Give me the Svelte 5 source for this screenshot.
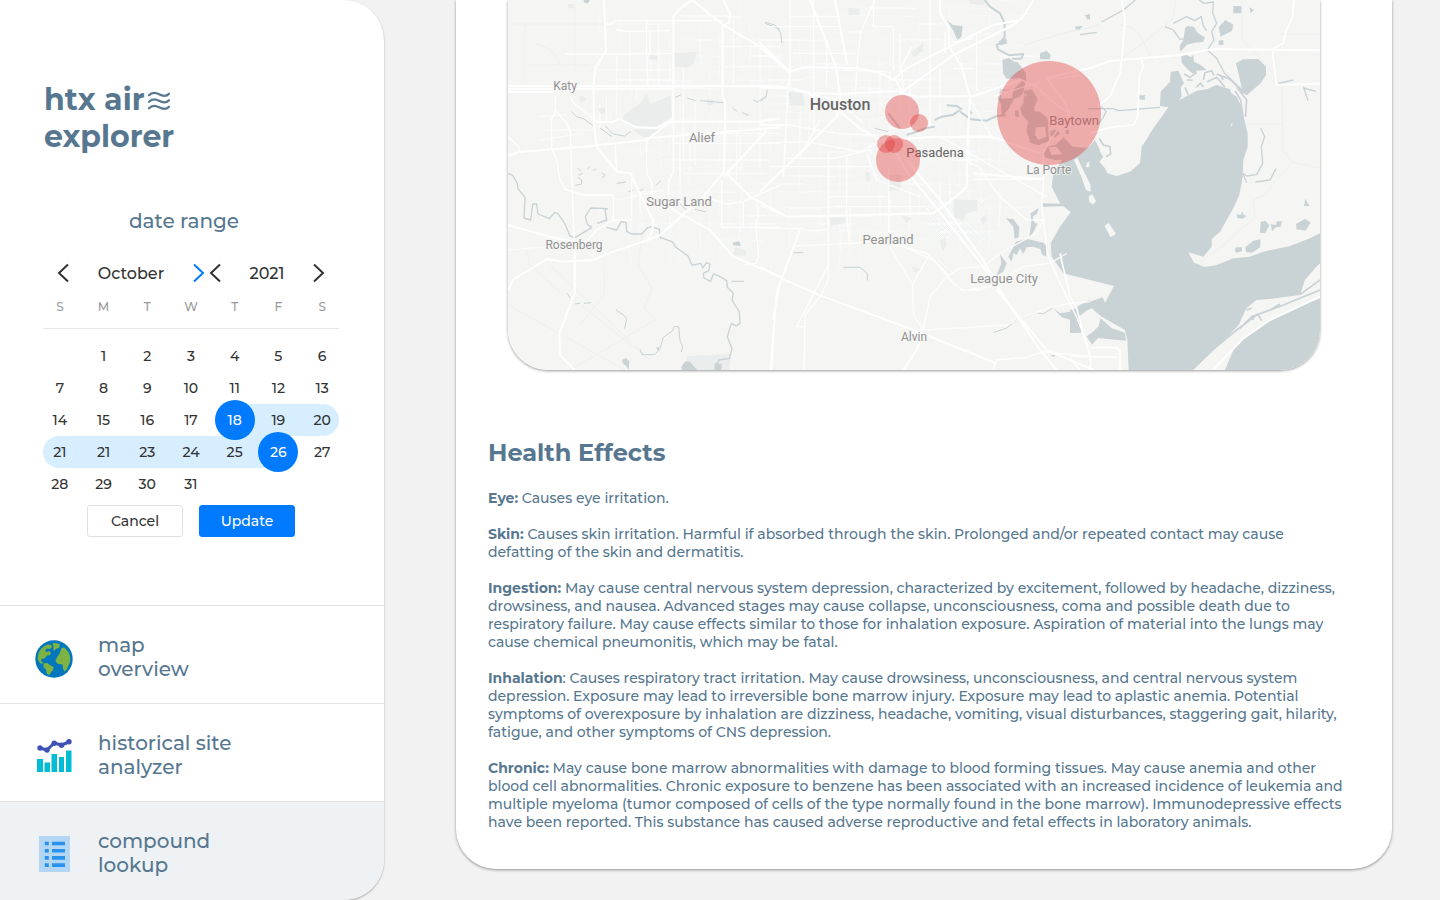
<script>
  const weekdays = ['S', 'M', 'T', 'W', 'T', 'F', 'S'];
  const weeks = [
    [null, 1, 2, 3, 4, 5, 6],
    [7, 8, 9, 10, 11, 12, 13],
    [14, 15, 16, 17, 18, 19, 20],
    [21, 21, 23, 24, 25, 26, 27],
    [28, 29, 30, 31, null, null, null]
  ];
  const rangeStart = 18;
  const rangeEnd = 26;

  function dayClass(day) {
    if (day === rangeStart) return 'start';
    if (day === rangeEnd) return 'end';
    return day > rangeStart && day < rangeEnd ? 'within' : '';
  }

  const effects = [
    ['Eye:', ' Causes eye irritation.'],
    ['Skin:', ' Causes skin irritation. Harmful if absorbed through the skin. Prolonged and/or repeated contact may cause defatting of the skin and dermatitis.'],
    ['Ingestion:', ' May cause central nervous system depression, characterized by excitement, followed by headache, dizziness, drowsiness, and nausea. Advanced stages may cause collapse, unconsciousness, coma and possible death due to respiratory failure. May cause effects similar to those for inhalation exposure. Aspiration of material into the lungs may cause chemical pneumonitis, which may be fatal.'],
    ['Inhalation', ': Causes respiratory tract irritation. May cause drowsiness, unconsciousness, and central nervous system depression. Exposure may lead to irreversible bone marrow injury. Exposure may lead to aplastic anemia. Potential symptoms of overexposure by inhalation are dizziness, headache, vomiting, visual disturbances, staggering gait, hilarity, fatigue, and other symptoms of CNS depression.'],
    ['Chronic:', ' May cause bone marrow abnormalities with damage to blood forming tissues. May cause anemia and other blood cell abnormalities. Chronic exposure to benzene has been associated with an increased incidence of leukemia and multiple myeloma (tumor composed of cells of the type normally found in the bone marrow). Immunodepressive effects have been reported. This substance has caused adverse reproductive and fetal effects in laboratory animals.']
  ];

  const places = [
    { name: 'Katy', x: 565, y: 90, size: 12 },
    { name: 'Alief', x: 702, y: 142, size: 13 },
    { name: 'Sugar Land', x: 679, y: 206, size: 13 },
    { name: 'Rosenberg', x: 574, y: 249, size: 12 },
    { name: 'Pearland', x: 888, y: 244, size: 13 },
    { name: 'League City', x: 1004, y: 283, size: 13 },
    { name: 'Alvin', x: 914, y: 341, size: 12 },
    { name: 'La Porte', x: 1049, y: 174, size: 12 },
    { name: 'Baytown', x: 1074, y: 125, size: 13 },
    { name: 'Pasadena', x: 935, y: 157, size: 13, kind: 'town' },
    { name: 'Houston', x: 840, y: 110, size: 16, kind: 'city' }
  ];

  const sites = [
    [902, 112, 17], [919, 123, 9], [886, 144, 9], [894, 144, 9], [898, 160, 22], [1049, 113, 52]
  ];

  // Side streets: short segments on a loose grid around the city centre.
  let seed = 11;
  const rand = () => (seed = (seed * 16807) % 2147483647) / 2147483647;
  let streets = '';
  for (let i = 0; i < 280; i++) {
    const a = rand();
    const b = rand();
    const x = 600 + Math.round((a * 400) / 10) * 10;
    const y = Math.round((b * 240) / 8) * 8;
    const len = 14 + Math.round(rand() * 40);
    const bend = Math.round(rand() * 4 - 2);
    streets += i % 2 ? `M${x} ${y}h${len}l4 ${bend}h10` : `M${x} ${y}v${Math.round(len * 0.8)}l${bend} 4v8`;
  }
  for (let i = 0; i < 24; i++) {
    const x = 915 + Math.round(rand() * 55);
    const y = 205 + Math.round(rand() * 55);
    streets += i % 2 ? `M${x} ${y}l22 20` : `M${x} ${y}l20 -20`;
  }
</script>

{#snippet chevron(dir)}
  <svg width="12" height="20" viewBox="0 0 12 20" aria-hidden="true">
    <path d={dir === 'left' ? 'M11 1.5 2 10l9 8.5' : 'M1 1.5 10 10l-9 8.5'} fill="none" stroke="currentColor" stroke-width="2" />
  </svg>
{/snippet}

<div class="page">
  <aside>
    <h1>
      htx air
      <svg width="24" height="20" viewBox="0 0 24 20" aria-hidden="true">
        <g fill="none" stroke="currentColor" stroke-width="2.200" stroke-linecap="round">
          <path d="M2 4.300C5 1 8.500 1.300 12 3.200S19 6 22 2.700" />
          <path d="M2 10.800C5 7.500 8.500 7.800 12 9.700S19 12.500 22 9.200" />
          <path d="M2 17.300C5 14 8.500 14.300 12 16.200S19 19 22 15.700" />
        </g>
      </svg><br />explorer
    </h1>

    <section class="dates" aria-label="date range">
      <h2>date range</h2>
      <div class="pickers">
        <div class="picker month">
          <button aria-label="Previous month">{@render chevron('left')}</button>
          <span>October</span>
          <button class="active" aria-label="Next month">{@render chevron('right')}</button>
        </div>
        <div class="picker year">
          <button aria-label="Previous year">{@render chevron('left')}</button>
          <span>2021</span>
          <button aria-label="Next year">{@render chevron('right')}</button>
        </div>
      </div>
      <table>
        <thead>
          <tr>{#each weekdays as d}<th scope="col">{d}</th>{/each}</tr>
        </thead>
        <tbody>
          {#each weeks as week}
            <tr>
              {#each week as day}
                <td class={dayClass(day)}>{#if day}<button>{day}</button>{/if}</td>
              {/each}
            </tr>
          {/each}
        </tbody>
      </table>
      <div class="actions">
        <button>Cancel</button>
        <button class="primary">Update</button>
      </div>
    </section>

    <nav>
      <a href="#map">
        <svg width="38" height="38" viewBox="0 0 38 38" aria-hidden="true">
          <circle cx="19" cy="19" r="18.700" fill="#0277bd" />
          <g fill="#7cb342">
            <path d="M3 20C2 12 7 6 13 4.500l3 .5 1 2-2 2-3-.5-2 2 1.500 1.500 3-1 1.500 2-1 2-3 .5-2.500 3-3 .500-.5 2 2 1.500-1 1.500-2-1Z" />
            <path d="M17.500 3.300 21 3l4 1.200-1 3.800-3 .7-1.500 2-1.500-1.500.5-2.500Z" />
            <path d="M26.500 8 29 7.500C34 11 36 16 35 22l-3 7-2.500 2.500-1.500-3-.5-4-5-.7-2-3.300 2-4 2-3 1.500-4Z" />
            <path d="M8.500 23.500 12 23l3 2 3.500 2-.5 3.500-2 1.500-1.500 3-2.500-1-1-4.500-2.500-2.500Z" />
          </g>
        </svg>
        <span>map<br />overview</span>
      </a>
      <a href="#history">
        <svg width="38" height="38" viewBox="0 0 38 38" aria-hidden="true">
          <path fill="#00bcd4" d="M2 21h6V34H2ZM9.500 24.500h5.500V34H9.500ZM16.500 16H22v18h-5.500ZM24 19h5v15h-5ZM31 12.500h5.500V34H31Z" />
          <g fill="#3f51b5">
            <path d="M5 10 12 12 19.200 5 26.500 7 34 4" fill="none" stroke="#3f51b5" stroke-width="3" stroke-linejoin="round" />
            <circle cx="5" cy="10" r="2.700" /><circle cx="12" cy="12" r="2.700" /><circle cx="19.200" cy="5.300" r="2.700" /><circle cx="26.500" cy="7.300" r="2.700" /><circle cx="34" cy="3.800" r="2.700" />
          </g>
        </svg>
        <span>historical site<br />analyzer</span>
      </a>
      <a href="#compounds" class="current" aria-current="page">
        <svg width="38" height="38" viewBox="0 0 38 38" aria-hidden="true">
          <path fill="#b3d6f4" d="M4 0H35v36H4Z" />
          <path fill="#2793ee" d="M9.800 5.700h4v3.600h-4Zm7.200 0h13v3.600H17ZM9.800 12.900h4v3.600h-4Zm7.200 0h13v3.600H17ZM9.800 20.100h4v3.600h-4Zm7.200 0h13v3.600H17ZM9.800 27.300h4v3.600h-4Zm7.200 0h13v3.600H17Z" />
        </svg>
        <span>compound<br />lookup</span>
      </a>
    </nav>
  </aside>

  <main>
    <article>
      <svg class="map" viewBox="508 0 812 370" role="img" aria-label="Map of the Houston area">
        <rect x="508" width="812" height="370" fill="#f5f5f4" />

        <!-- Streets -->
        <path d={streets} fill="none" stroke="#eff1f0" stroke-width="2" />
        <path d={streets} fill="none" stroke="#fcfdfd" stroke-width="1" />
        <g fill="none" stroke="#edefee" stroke-width="1">
          <path d="M508 24H606M525 25V84M528 65H590M575 0V70M535 44C545 46 556 50 560 66M508 305 625 370M582 306 650 360M550 265 650 360M570 370 655 320M642 235 638 265 652 288 644 308 655 320M526 250 530 265 560 292M605 265 604 295 580 325M1024 45 1064 33 1100 25M1280 34H1320M1176 0 1173 18 1147 40 1120 60M1120 25C1145 25 1148 60 1155 62M1242 0V40L1262 60 1282 85 1283 150 1292 162 1320 168M1292 162 1264 195 1253 200 1255 217 1220 248 1200 262M1246 124H1282" />
        </g>

        <!-- Parks and reservoirs -->
        <g fill="#ebedec">
          <g transform="translate(450 0) scale(.33333)">
            <path d="M520 345 570 310 590 280 600 312 662 286 666 350 620 385 560 385 520 365ZM545 388 640 388 600 412 580 412ZM672 158 740 156 732 190 718 202 676 200ZM710 1068 845 1062 838 1110 710 1110ZM770 295 790 298 788 315 772 316ZM446 325 466 325 464 342 450 340ZM352 12 372 12 370 26 354 24ZM598 165 624 167 622 180 598 178ZM855 742 890 750 886 768 850 765ZM386 290 400 288 410 300 392 308Z" />
          </g>
          <g transform="translate(760 0) scale(.33333)">
            <path d="M84 274 130 280 134 318 90 316ZM580 598 652 600 650 632 618 640 610 662 582 650ZM384 525 425 525 420 570 388 572ZM264 24 300 26 298 44 266 46ZM210 652 260 652 250 672 212 676ZM452 160 490 128 490 152 462 172ZM316 516 330 518 330 544 318 542ZM540 720 556 714 560 735 548 755ZM660 656 676 645 682 660 670 675ZM625 0 680 0 670 14 630 12ZM456 800 480 806 466 820ZM426 646 455 655 440 670Z" />
          </g>
        </g>

        <!-- Rivers and bayous -->
        <g fill="none" stroke="#c9d2d4" stroke-linejoin="round">
          <g transform="translate(450 0) scale(.33333)" stroke-width="4">
            <path d="M174 520 188 526 202 550 204 566 225 592 222 654 242 660 248 612 260 612 264 642 298 656 314 638 325 642 345 672 360 708 375 713 426 682M442 670 470 660 465 630 472 626 422 624 406 650 412 674 426 682M470 682 500 690 514 664 528 668 530 694 545 702 575 702 592 684 605 680 628 688 630 712 668 726 676 740 714 768 726 796 752 790 758 804 770 788 780 792 776 812 760 820 762 834 782 844 790 822 806 828 830 842 832 862 850 880 846 900 868 936 870 970 858 978 844 970 832 1010 846 1046 838 1076 806 1080 796 1110" />
            <path d="M376 556 394 552 396 540 382 532M386 525 398 520M394 514 382 504M412 508 418 500M430 512 438 506M455 518 466 526 456 534M500 550 528 546M535 575 550 570M566 572 580 568M618 556 632 542M364 334 380 350 400 356 436 382M450 384 486 410M466 378 490 402 524 408 542 394M676 292 694 284M712 294 736 302M750 302 820 308M848 324 860 334M876 338 896 346M910 300 922 306 950 288M945 70 966 78 990 88M352 880 360 894M374 912 390 910M402 910 424 908M498 930 522 946 530 956 524 986M570 1048 576 1064 614 1064 630 1046 640 1012 668 992 672 980 686 980 690 1022 698 1040 694 1056M844 844 882 844M690 612 710 630M735 628 768 636" stroke-width="3" />
          </g>
          <g transform="translate(760 0) scale(.33333)" stroke-width="5">
            <path d="M674 0 690 20 720 40 734 70 734 110 720 130 710 134 714 148 748 166 790 162 784 176 756 176M524 360 545 350 580 344 600 330M560 316 590 318 606 328M600 335 632 358 680 362 710 348 738 346M624 330 636 340M440 405 470 395 494 385 524 380M385 340 420 385" stroke-width="6" />
            <path d="M0 306 18 290 22 270M16 66 46 76 62 100 66 130M250 802H300L322 820V842M100 758H130M700 998 740 984 770 960M765 966 830 938 850 942 880 922M345 385 385 395" stroke-width="3" />
          </g>
          <g transform="translate(1070 0) scale(.33333)" stroke-width="4">
            <path d="M94 66 160 30 196 0M30 104 80 97M55 326H130L145 332 270 322M388 0 402 10 430 6 428 40 440 70 425 95 432 120 412 150 440 175 465 222M285 80 310 90 330 118 350 115M310 70 350 50 374 62 394 50 400 78 410 92M700 260 714 302M700 264 738 274M625 250 670 240M572 384 584 410 574 440 578 490 560 524 530 528 518 520 530 548M556 546 600 540 618 506M466 222 532 285M95 320 108 335 98 355 85 372" />
          </g>
        </g>

        <!-- Bays and lakes -->
        <g fill="#c9d2d4">
          <g transform="translate(1070 0) scale(.33333)">
            <path d="M-55 560-30 610 2 637-30 680-58 730-55 770-20 820 0 825 132 858 105 908 98 892 60 905 20 925 0 930 0 950 65 925 95 950 165 990 172 1020 176 1110H370L430 1050 500 990 515 955 530 925 560 900 590 898 690 885 705 840 735 805 750 790V700L720 715 660 738 580 755 540 770 490 775 440 795 405 801 372 788 355 757 400 770 425 740V718L450 695 490 625 508 585 518 530 520 480 533 440V400L523 360 515 320 500 290 484 280 480 268 460 262 440 255 410 268 380 272 325 302 335 290 332 262 342 250 325 212 302 215 300 245 272 275 270 318 295 322 240 400 235 410 215 440 210 490 180 515 140 528 112 520 105 505 88 485 100 470 80 440 60 438 20 460-20 475-50 520Z" />
            <path d="M750 895 690 915 600 960 530 1005 490 1050 465 1110H750Z" />
            <path d="M498 190 520 178 565 177 588 200 588 225 572 250 548 270 532 284 518 280 508 230Z" />
            <path d="M345 85 352 78 372 80 382 98 405 112 400 125 375 128 350 134 332 155 328 140 340 120ZM334 168 350 165 362 172 370 165 372 185 392 195 410 210 380 212 370 222 350 205 335 188ZM446 82 466 60 490 74 486 92 452 110ZM446 122 460 120 460 135 446 135ZM490 18H514V40H490ZM538 22 552 30 542 40ZM44 44 60 48 54 60ZM14 82 38 78 28 90ZM206 286 225 286 224 300 208 298ZM572 666 586 662 598 676 586 700 570 698ZM602 672 618 676 620 664 636 664 632 680 618 682 606 694ZM678 672 706 656 722 668 706 692 680 688ZM526 742 550 722 572 718 570 742 546 758 528 756ZM494 748 500 742 516 742 516 754 498 758ZM706 596 718 618 702 618ZM500 642 512 645 518 634 520 644 530 648 518 656 502 654ZM0 958 28 952 34 998H0ZM52 1010 85 980 92 955 125 985 165 998 168 1022 120 1018 84 1014 66 1034Z" />
          </g>
          <g transform="translate(760 0) scale(.33333)">
            <path d="M560 60 580 76 608 78 604 110 592 120 582 95ZM840 160 860 152 872 165 870 178 840 178ZM716 124 738 114 742 130 722 136ZM848 610 930 612 930 618 850 620ZM738 655 760 658 778 682 776 712 764 716 760 680ZM812 640 836 624 832 640 818 650 824 668 832 672 818 700 808 710 814 665ZM745 770 768 725 800 716 850 728 862 740 858 770 845 762 842 748 820 740 800 742 790 762 780 745 770 765 760 760 755 785ZM720 762 740 790 730 815 710 826 724 790ZM880 925 900 940 930 935 960 915 990 900 990 925 955 950 955 998H932V960L905 952ZM945 80 970 78 948 90ZM976 46 990 42 990 60ZM870 1064 886 1066 882 1072ZM980 1010 990 1000V1025Z" />
          </g>
          <g transform="translate(985 50) scale(.33333)">
            <path d="M52 30 72 24 85 34 100 38 122 68 124 100 105 85 65 86 54 70ZM46 118 84 120 112 92 120 100 115 128 105 140 88 146 70 178 50 200 48 160 38 148ZM118 122 140 118 158 148 148 172 148 184 165 185 188 205 192 272 160 286 136 278 124 240 130 215 112 195 105 175 115 160ZM90 182 100 180 102 202 90 198ZM196 244 212 238 225 250 212 262 196 258ZM242 240H252V252H242ZM174 308 186 290 212 284 236 262 262 290 310 294 330 270 345 300 320 330 280 350 262 328 210 330 180 322Z" />
          </g>
          <g transform="translate(450 0) scale(.33333)">
            <path d="M516 1080 528 1074 538 1084 536 1110 530 1100 518 1088ZM694 1100 706 1084 720 1086 742 1110H696ZM794 1090 816 1092 814 1110H794ZM400 0H420L414 10 404 8ZM848 728 868 724 872 738 850 736ZM618 1044 628 1040 626 1054Z" />
          </g>
        </g>

        <!-- Islands and barrier strips -->
        <g fill="#f5f5f4">
          <g transform="translate(1070 0) scale(.33333)">
            <path d="M12 480 22 474 42 515 62 555 62 575 48 570 34 530ZM56 590 66 582 78 602 70 614 58 606ZM104 678 116 668 138 702 122 712ZM50 490 58 484 58 500 48 502ZM708 838 738 805 742 830 715 860 700 865ZM482 372 488 370 486 380Z" />
            <path d="M515 965 530 925 560 900 620 905 600 930 690 885 750 850V895L690 915 600 960 530 1005 490 1050 462 1110H370L440 1045Z" />
          </g>
          <g transform="translate(985 50) scale(.33333)">
            <path d="M48 122 84 120 82 144 48 146ZM152 232 180 230 184 260 160 270 150 254ZM190 292 214 290 232 312 200 316ZM118 128 125 135 120 142Z" />
          </g>
        </g>
        <g transform="translate(1070 0) scale(.33333)" fill="none" stroke="#c9d2d4" stroke-width="5">
          <path d="M370 1105 430 1048 500 990 560 945 640 915 750 870M690 884 750 840M510 985 545 950 600 930 630 912M530 930 545 925M562 940 575 962M548 945 550 960M342 222 360 232 378 220 372 208M378 262 392 250 400 262M400 240 405 218 425 212 432 226M412 245 440 232 465 262M345 262 355 285M350 240 368 240M440 222 480 238 505 262 520 280M500 262 530 300 526 350M495 272 512 300 518 345M450 225 460 240M88 415 100 435 120 440 122 462 108 470" />
        </g>

        <!-- Secondary roads -->
        <g fill="none" stroke="#fff" stroke-linejoin="round">
          <g transform="translate(450 0) scale(.33333)" stroke-width="4">
            <path d="M470 72 485 72 495 62H815M345 162H500L668 160M590 60V165L594 260M500 90 540 95 660 92M316 290V330L350 370 362 400V440L374 760V880M305 445 304 360 316 332M305 445 320 480 330 540 346 568 400 585H490V660M174 410 206 440 208 456M360 290 372 310 440 365M590 415V520L606 548V600M670 365V515L656 545V600L665 625 700 650M495 430 500 515M545 520V660L490 660 440 690 400 735 375 745M760 590 830 612 880 605 990 555M880 605V680M815 540V680M815 682H990M920 600 925 640 918 680 926 770 918 790 880 795M965 1108 980 870 990 850" />
            <path d="M810 140H990M820 200H990M850 60V250M930 110V500M700 200V480M735 310V500M860 390V540M680 400H990M670 430H990M680 480H960M700 520H950M500 600 640 570M174 750 290 740 370 735M500 165V260M540 100V260M625 70V260M440 210H670M470 290V370M500 260V350M560 260V300M270 350 350 345M280 390H430M270 420 400 400" stroke-width="3" stroke-opacity=".8" />
          </g>
          <g transform="translate(760 0) scale(.33333)" stroke-width="4">
            <path d="M0 140 90 222 84 260 76 440 70 530M160 0 162 400M345 0 302 96 290 212 286 290M510 0V380M455 140 425 200 430 280M0 260H80L150 278 170 320M0 375H90L230 400 345 405M0 430 140 425 300 455 380 415M70 475H220L330 450M205 460V840L180 890 135 945 132 1110M260 470V640L268 726M386 500V735L458 855 460 945 490 990M80 340 72 480M0 615 80 650 205 648M0 685H120L150 692 205 688M110 738 270 730 330 725 430 740 520 780 580 850 610 872 680 860M320 460 350 540 480 590M100 270 230 300 310 370M180 360 120 470M250 210 380 215M286 160H100M240 50H90M240 80H20M540 205V290M630 300 700 420M555 95V160M650 100V270M560 130 640 115M580 205H640M210 590H380M30 500H330M220 620H500M340 0V80H400V210M420 100V220M90 220V0M200 260V120M860 240 960 225M640 538H850M620 485 655 500 720 590 800 660H850M700 290 840 245M510 760 460 850M480 990 580 985 740 975 800 950 860 925 930 910 990 905M430 740 500 760 560 820 580 850M600 870 660 870 710 850 790 800 870 790 920 760M490 990 510 890 560 830 600 805 670 800 720 760 830 700 850 660M50 880 30 1110M205 795 110 980 135 980M540 410 860 590" stroke-opacity=".85" />
            <path d="M850 450V560L845 610 862 760 900 850 945 940 985 1040M700 1108 710 1080 800 1072 850 1055 990 1070M860 235 910 300 930 340 870 420 850 460M775 235 830 260 890 315 990 380" />
          </g>
          <g transform="translate(1070 0) scale(.33333)" stroke-width="5">
            <path d="M155 0 165 60 155 180 150 220 120 290 80 320M215 180 220 200 208 230 203 350 190 375 120 382 60 400M672 0 668 50 648 95 640 130 610 145 608 165 620 255 750 251M-30 760 0 890 20 925 45 1020 62 1075 62 1110M0 1068 145 1072M62 1043H140L150 1052V1110M0 1075 30 1110" />
          </g>
        </g>

        <!-- Highways -->
        <g fill="none" stroke="#fff" stroke-width="6" stroke-linejoin="round">
          <g transform="translate(450 0) scale(.33333)">
            <path d="M174 258H990M174 266H670M174 275H310M462 0 468 150 436 205 430 260 432 370 440 440 500 515 542 520 560 560 610 665 605 700 590 720M174 466 208 456 400 440 590 420 660 365H930L990 355M440 366 490 366 505 356 560 382 620 384 650 366M590 415 990 382M726 0 820 75 930 140 990 190M820 0 840 40 838 66 818 82 818 290 826 310 822 515M822 515 760 590 630 705 590 722 490 755 430 780 340 785 290 778 190 838 174 870M830 520 900 590 990 640M822 530 950 392M700 645 780 690 850 770 990 830M670 160V50L690 25 726 0M670 160V365M374 740V880L328 1000 330 1065 372 1108M174 675 300 710 370 725" />
          </g>
          <g transform="translate(760 0) scale(.33333)">
            <path d="M0 130 90 215 130 202 295 205 345 215 375 225 410 245 428 280 470 290 640 288 780 240M150 0 228 200 242 300 230 350 150 430 0 575M225 0 262 195M240 335 300 385 350 415 400 445 440 515 530 625 670 800 840 1050 890 1110M420 280 580 165 760 75 790 50 820 0M400 240 440 205 570 140 700 75 780 60M540 0V40L565 80 568 140 605 200 630 290 624 400 620 560 600 580 520 640 80 650 0 605M0 262 80 265M160 280 240 282 420 272M385 420 520 410 700 412 840 460M440 480 540 600 670 780 720 870 840 1050M0 800 70 838 190 890 460 990 710 1090M490 1000 470 1050 430 1110M710 870 860 1050 1000 1110M0 375 70 375M120 690 60 850 38 960M640 520 850 538" />
          </g>
          <g transform="translate(1070 0) scale(.33333)">
            <path d="M-70 235 30 210 60 205 120 183 330 165 430 147 750 151M430 1108 520 1015 600 960 750 890" />
          </g>
        </g>

        {#each places as p}
          <text class={p.kind} x={p.x} y={p.y} font-size={p.size} text-anchor="middle">{p.name}</text>
        {/each}
        <g fill="#e03c3c" fill-opacity=".4">
          {#each sites as [cx, cy, r]}<circle {cx} {cy} {r} />{/each}
        </g>
      </svg>

      <section class="effects">
        <h2>Health Effects</h2>
        {#each effects as [label, text]}
          <p><strong>{label}</strong>{text}</p>
        {/each}
      </section>
    </article>
  </main>
</div>

<style>
  :global(body) {
    margin: 0;
    background: #f2f2f2;
  }
  .page {
    display: flex;
    min-height: 100vh;
    color: #56778f;
    font-family: Montserrat, Inter, sans-serif;
    font-weight: 500;
  }
  h1, h2, p {
    margin: 0;
  }
  button {
    padding: 0;
    border: 0;
    background: none;
    color: inherit;
    font: inherit;
    cursor: pointer;
  }
  aside {
    display: flex;
    flex-direction: column;
    flex: none;
    box-sizing: border-box;
    width: 384px;
    overflow: hidden;
    border-radius: 0 40px 40px 0;
    background: #fff;
    box-shadow: 0 1px 2px rgba(0, 0, 0, 0.35);
  }
  h1 {
    padding: 81px 44px 0;
    font-size: 30px;
    font-weight: 700;
    line-height: 37px;
  }
  h1 svg {
    margin-left: -6px;
    vertical-align: -1px;
  }
  .dates {
    padding-top: 54px;
  }
  .dates h2 {
    width: 368px;
    font-size: 20px;
    font-weight: 500;
    line-height: 24px;
    text-align: center;
  }
  .pickers {
    display: flex;
    gap: 4px;
    margin: 28px 0 0 57px;
    color: #333;
    font-size: 16px;
  }
  .picker {
    display: flex;
    align-items: center;
    justify-content: space-between;
    height: 24px;
  }
  .month {
    width: 148px;
  }
  .year {
    width: 116px;
  }
  .picker button {
    display: flex;
  }
  .picker .active {
    color: #007aff;
  }
  table {
    width: 306px;
    margin-left: 38px;
    border-spacing: 0;
    table-layout: fixed;
    color: #333;
    font-size: 14px;
  }
  th, td {
    position: relative;
    padding: 0;
    text-align: center;
  }
  th {
    height: 42px;
    padding-bottom: 2px;
    color: #999;
    font-size: 12px;
    font-weight: 500;
  }
  th::after {
    content: '';
    position: absolute;
    inset: auto 0 0;
    height: 1px;
    background: #e6e6e6;
  }
  th:first-child::after {
    left: 5px;
  }
  th:last-child::after {
    right: 5px;
  }
  tbody::before {
    content: '';
    display: block;
    height: 11px;
  }
  td {
    height: 32px;
  }
  td button {
    position: relative;
    width: 40px;
    height: 32px;
    line-height: 32px;
  }
  .within::before, .start::before, .end::before {
    content: '';
    position: absolute;
    inset: 0;
    background: #d6eeff;
  }
  .start::before {
    left: 50%;
  }
  .end::before {
    right: 50%;
  }
  .within:first-child::before {
    left: 5px;
    border-radius: 16px 0 0 16px;
  }
  .within:last-child::before {
    right: 5px;
    border-radius: 0 16px 16px 0;
  }
  .start button, .end button {
    height: 40px;
    margin: -4px 0;
    border-radius: 50%;
    background: #007aff;
    color: #fff;
    z-index: 1;
  }
  .actions {
    display: flex;
    justify-content: center;
    gap: 16px;
    width: 306px;
    margin: 5px 0 0 38px;
  }
  .actions button {
    box-sizing: border-box;
    width: 96px;
    height: 32px;
    border: 1px solid #e0e0e0;
    border-radius: 3px;
    color: #333;
    font-size: 14px;
  }
  .actions .primary {
    border-color: #007aff;
    background: #007aff;
    color: #fff;
  }
  nav {
    display: flex;
    flex-direction: column;
    flex: 1;
    margin-top: 68px;
  }
  nav a {
    display: flex;
    gap: 25px;
    box-sizing: border-box;
    height: 98px;
    padding: 27px 35px 0;
    border-top: 1px solid #e0e2e4;
    color: inherit;
    font-size: 20px;
    line-height: 24px;
    text-decoration: none;
  }
  nav a svg {
    margin-top: 7px;
  }
  nav .current {
    flex: 1 0 auto;
    height: auto;
    background: #eef2f5;
  }
  main {
    flex: 1;
    min-width: 0;
    padding: 0 48px 31px 72px;
  }
  article {
    padding-bottom: 38px;
    border-radius: 0 0 40px 40px;
    background: #fff;
    box-shadow: 0 1px 3px rgba(0, 0, 0, 0.4);
  }
  .map {
    display: block;
    width: calc(100% - 124px);
    margin-left: 52px;
    border-radius: 0 0 40px 40px;
    box-shadow: 0 1px 3px rgba(0, 0, 0, 0.4);
  }
  .map text {
    fill: #929292;
    font-family: Roboto, sans-serif;
    font-weight: 400;
    paint-order: stroke;
    stroke: #f5f5f4;
    stroke-width: 2px;
    stroke-opacity: 0.7;
  }
  .map .town {
    fill: #666;
  }
  .map .city {
    fill: #666;
    font-weight: 500;
  }
  .effects {
    padding: 68px 48px 0 32px;
    font-size: 14px;
    line-height: 18px;
  }
  .effects h2 {
    margin-bottom: 21px;
    font-size: 24px;
    font-weight: 700;
    line-height: 30px;
  }
  .effects p + p {
    margin-top: 18px;
  }
  .effects strong {
    font-weight: 700;
  }
</style>
